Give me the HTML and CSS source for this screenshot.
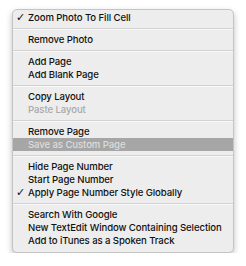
FILE: index.html
```html
<!DOCTYPE html>
<html>
<head>
<meta charset="utf-8">
<link rel="stylesheet" href="styles.css">
</head>
<body>
<div class="menu">
  <div class="item"><span class="check">✓</span>Zoom Photo To Fill Cell</div>
  <div class="sep"></div>
  <div class="item">Remove Photo</div>
  <div class="sep"></div>
  <div class="item">Add Page</div>
  <div class="item">Add Blank Page</div>
  <div class="sep"></div>
  <div class="item">Copy Layout</div>
  <div class="item disabled">Paste Layout</div>
  <div class="sep"></div>
  <div class="item">Remove Page</div>
  <div class="item disabled selected">Save as Custom Page</div>
  <div class="sep"></div>
  <div class="item">Hide Page Number</div>
  <div class="item">Start Page Number</div>
  <div class="item"><span class="check">✓</span>Apply Page Number Style Globally</div>
  <div class="sep"></div>
  <div class="item">Search With Google</div>
  <div class="item">New TextEdit Window Containing Selection</div>
  <div class="item">Add to iTunes as a Spoken Track</div>
</div>
</body>
</html>
```
FILE: styles.css
```css
html, body {
  margin: 0;
  padding: 0;
  background: #ffffff;
}
body {
  padding: 9px 12px 0 12px;
  font-family: Inter, "Liberation Sans", sans-serif;
}
.menu {
  width: 220px;
  background: #ededed;
  border: 1px solid #c4c4c4;
  border-radius: 5px;
  padding: 1px 0 5px 0;
  box-shadow: 0 3px 6px rgba(0,0,0,0.25);
  display: flex;
  flex-direction: column;
}
.item {
  position: relative;
  height: 13px;
  line-height: 13px;
  font-size: 9.6px;
  font-weight: 500;
  letter-spacing: -0.1px;
  color: #111111;
  padding-left: 15px;
  white-space: nowrap;
}
.check {
  position: absolute;
  left: 3px;
  top: 0;
  font-family: "DejaVu Sans", sans-serif;
  font-size: 11px;
  font-weight: bold;
}
.disabled {
  color: #a9a9a9;
}
.selected {
  background: #a6a6a6;
  color: #dcdcdc;
}
.sep {
  height: 9px;
  display: flex;
  flex-direction: column;
  justify-content: center;
}
.sep::before {
  content: "";
  display: block;
  height: 1px;
  background: #d2d2d2;
  border-bottom: 1px solid #f8f8f8;
}
```
